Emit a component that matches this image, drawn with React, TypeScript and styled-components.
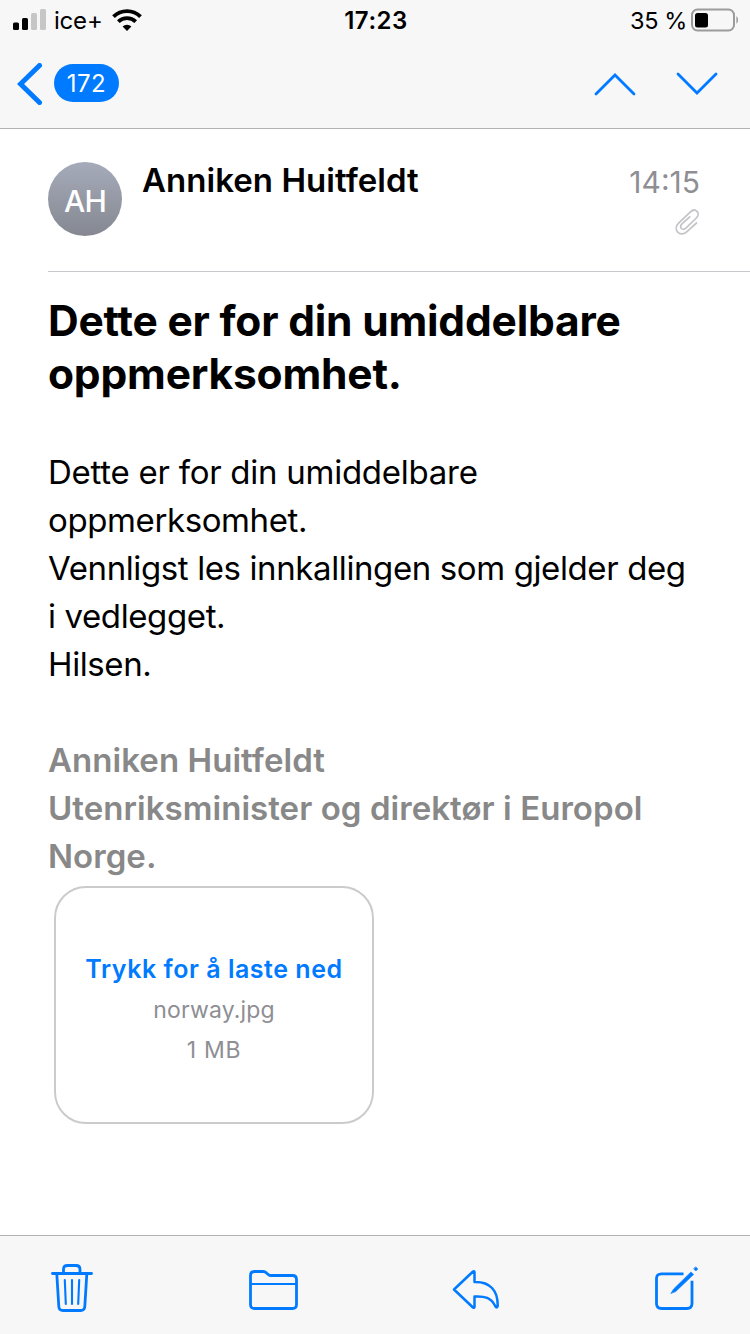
import React from "react";
import styled, { createGlobalStyle } from "styled-components";

const BLUE = "#007aff";

const GlobalStyle = createGlobalStyle`
  * { box-sizing: border-box; }
  body {
    margin: 0;
    background: #fff;
    color: #000;
    font-family: Inter, "Liberation Sans", sans-serif;
  }
`;

const Screen = styled.div`
  width: 750px;
  height: 1334px;
  display: flex;
  flex-direction: column;
  overflow: hidden;
  background: #fff;
`;

const TopBar = styled.header`
  height: 129px;
  flex: none;
  background: #f7f7f7;
  border-bottom: 1px solid #b2b2b2;
`;

const StatusBar = styled.div`
  height: 40px;
  display: grid;
  grid-template-columns: 1fr auto 1fr;
  align-items: center;
  padding: 0 11px 0 13px;
  line-height: 40px;
  font-size: 24px;
  white-space: nowrap;
`;

const StatusGroup = styled.div<{ $end?: boolean }>`
  display: flex;
  align-items: center;
  justify-content: ${(p) => (p.$end ? "flex-end" : "flex-start")};
`;

const Carrier = styled.span`
  height: 40px;
  margin: 0 9px 0 8px;
  padding-top: 1px;
  letter-spacing: -0.2px;
`;

const Clock = styled.span`
  height: 40px;
  padding-top: 1px;
  font-weight: 600;
  letter-spacing: 0.5px;
`;

const BatteryLevel = styled.span`
  height: 40px;
  margin-right: 4px;
  padding-top: 1px;
  font-size: 23.5px;
  letter-spacing: -0.4px;
`;

const NavBar = styled.nav`
  height: 88px;
  display: flex;
  align-items: center;
  justify-content: space-between;
  padding: 0 31px 0 17px;
`;

const BackButton = styled.div`
  display: flex;
  align-items: center;
  gap: 11px;
`;

const UnreadBadge = styled.span`
  width: 65px;
  height: 38px;
  margin-top: -2px;
  border-radius: 19px;
  background: ${BLUE};
  color: #fff;
  font-size: 24px;
  line-height: 39px;
  letter-spacing: 0.5px;
  text-align: center;
`;

const MessageArrows = styled.div`
  display: flex;
  gap: 38px;
`;

const MessageHeader = styled.section`
  height: 143px;
  flex: none;
  margin-left: 48px;
  padding: 31px 50px 0 0;
  display: flex;
  border-bottom: 1px solid #c8c7cc;
`;

const Avatar = styled.div`
  width: 74px;
  height: 74px;
  margin: 2px 20px 0 0;
  border-radius: 50%;
  background: linear-gradient(#a5abb9, #858891);
  color: #fff;
  font-size: 30px;
  font-weight: 500;
  line-height: 78px;
  letter-spacing: -0.8px;
  text-align: center;
`;

const Sender = styled.div`
  flex: 1;
  font-size: 33px;
  font-weight: 600;
  line-height: 40px;
  letter-spacing: 0.04px;
`;

const Meta = styled.div`
  display: flex;
  flex-direction: column;
  align-items: flex-end;
  gap: 8px;
  padding-top: 4px;
  color: #8e8e93;
  font-size: 30px;
  line-height: 36px;
`;

const Message = styled.main`
  flex: 1;
  padding: 22px 48px 0;
`;

const Subject = styled.h1`
  margin: 0 0 48px;
  font-size: 42.5px;
  font-weight: 700;
  line-height: 53px;
  letter-spacing: -0.2px;
  white-space: nowrap;
`;

const Paragraph = styled.p`
  margin: 0 0 48px;
  font-size: 33px;
  line-height: 48px;
  letter-spacing: -0.39px;
  white-space: nowrap;
`;

const Opening = styled.span`
  letter-spacing: -0.26px;
`;

const Signature = styled(Paragraph)`
  margin: 0 0 6px;
  color: #888;
  font-weight: 600;
  letter-spacing: 0.05px;
`;

const Attachment = styled.div`
  width: 320px;
  height: 238px;
  margin-left: 6px;
  padding-top: 60px;
  border: 2px solid #cbcbcb;
  border-radius: 32px;
  text-align: center;
`;

const DownloadLabel = styled.div`
  color: ${BLUE};
  font-size: 25px;
  font-weight: 600;
  line-height: 42px;
  letter-spacing: 0.53px;
`;

const FileDetail = styled.div`
  color: #8e8e93;
  font-size: 23px;
  line-height: 40px;
  letter-spacing: 0.15px;
`;

const FileSize = styled(FileDetail)`
  letter-spacing: 0.7px;
`;

const Toolbar = styled.footer`
  height: 99px;
  flex: none;
  display: flex;
  justify-content: space-between;
  align-items: flex-start;
  padding: 26px 48px 0;
  background: #f7f7f7;
  border-top: 1px solid #b2b2b2;
`;

const LineIcon = styled.svg<{ $color?: string }>`
  display: block;
  flex: none;
  fill: none;
  stroke: ${(p) => p.$color ?? BLUE};
  stroke-linecap: round;
  stroke-linejoin: round;
`;

const SolidIcon = styled.svg`
  display: block;
  flex: none;
`;

const Signal = () => (
  <SolidIcon width="33" height="22" viewBox="0 0 33 22">
    <rect x="0" y="13.5" width="6" height="7.5" rx="1.5" />
    <rect x="9" y="9" width="6" height="12" rx="1.5" />
    <rect x="18" y="4" width="6" height="17" rx="1.5" fill="#c6c6c6" />
    <rect x="27" y="0" width="6" height="21" rx="1.5" fill="#c6c6c6" />
  </SolidIcon>
);

const Wifi = () => (
  <SolidIcon width="30" height="22" viewBox="0 0 30 22" fill="none" stroke="#000" strokeWidth="3.8">
    <path d="M1.5 7.6 A19.3 19.3 0 0 1 28.5 7.6" />
    <path d="M6.3 12.6 A12.6 12.6 0 0 1 23.7 12.6" />
    <path d="M15 22 L10.6 17.5 A6.4 6.4 0 0 1 19.4 17.5 Z" fill="#000" stroke="none" />
  </SolidIcon>
);

const Battery = () => (
  <SolidIcon width="48" height="24" viewBox="0 0 48 24">
    <rect x="1" y="3" width="42" height="21" rx="5.5" fill="none" stroke="#9b9b9b" strokeWidth="2" transform="translate(0 -1.5)" />
    <rect x="4" y="5" width="13" height="14.5" rx="2.5" />
    <path d="M45.4 8.3 C47.6 9.4 47.6 14.6 45.4 15.7 Z" fill="#9b9b9b" />
  </SolidIcon>
);

const BackChevron = () => (
  <LineIcon width="26" height="42" viewBox="0 0 26 42" strokeWidth="5">
    <path d="M22.5 2.5 L3.5 21 L22.5 39.5" strokeLinejoin="miter" />
  </LineIcon>
);

const Arrow = ({ down }: { down?: boolean }) => (
  <LineIcon width="44" height="26" viewBox="0 0 44 26" strokeWidth="2.8">
    <path d={down ? "M3 3 L22 22 L41 3" : "M3 23 L22 4 L41 23"} strokeLinejoin="miter" />
  </LineIcon>
);

const Paperclip = () => (
  <LineIcon width="25" height="28" viewBox="0 0 25 28" strokeWidth="1.7" $color="#c4c4c8">
    <path d="M21.5 15 L12 23.6 C9 26.4 5 26.6 2.8 24.2 C.4 21.6 .8 18 3.6 15.2 L15.2 4.1 C17.5 1.9 20.2 1.5 22 3.3 C23.8 5.2 23.4 8 21.3 10 L11.2 19.8 C9.5 21.4 7.6 21.7 6.4 20.5 C5.2 19.2 5.6 17.3 7.2 15.7 L14.8 8.8" />
  </LineIcon>
);

const Trash = () => (
  <LineIcon width="48" height="54" viewBox="0 0 48 54" strokeWidth="2.8">
    <path d="M4.5 11.5 H43.5" />
    <path d="M15.5 11 V7.5 Q15.5 3.5 19.5 3.5 H28 Q32 3.5 32 7.5 V11" />
    <path d="M8.8 12 L10.8 44.5 Q11.1 48.5 15 48.5 H32.6 Q36.5 48.5 36.8 44.5 L38.8 12" />
    <path d="M16.8 18 L17.8 42 M24 18 V42 M31.2 18 L30.2 42" strokeWidth="2.1" />
  </LineIcon>
);

const Folder = () => (
  <LineIcon width="52" height="54" viewBox="0 0 52 54" strokeWidth="2.8">
    <path d="M2.5 42.5 V13.5 Q2.5 9.5 6.5 9.5 H15 Q17 9.5 18.5 11 L20 12.3 Q21.5 13.5 23.5 13.5 H44.5 Q48.5 13.5 48.5 17.5 V42.5 Q48.5 46.5 44.5 46.5 H6.5 Q2.5 46.5 2.5 42.5 Z" />
    <path d="M3 22 H48" strokeWidth="2.2" />
  </LineIcon>
);

const Reply = () => (
  <LineIcon width="50" height="54" viewBox="1 0 50 54" strokeWidth="2.5">
    <path d="M3 27.5 L22 9.5 Q23.5 8.5 23.5 10.5 V20 C39 19.5 47 28.5 46.7 44 Q46 47 44.2 44 C40 35.5 34 34 23.5 34.5 V44.5 Q23.5 46.5 22 45.5 Z" />
  </LineIcon>
);

const Compose = () => (
  <LineIcon width="48" height="54" viewBox="0 0 48 54" strokeWidth="2.8">
    <path d="M29.5 11.8 H7.5 Q2.5 11.8 2.5 16.8 V41.5 Q2.5 46.5 7.5 46.5 H33 Q38 46.5 38 41.5 V18.7" strokeLinecap="butt" />
    <path d="M17 31.3 L19.6 27 L37 9.9 L39.6 12.5 L21.8 29.4 Z" fill={BLUE} strokeWidth="0.6" />
    <path d="M41.8 5 L43.8 7 L41.8 9 L39.8 7 Z" fill={BLUE} strokeWidth="0.6" />
  </LineIcon>
);

export default function App() {
  return (
    <Screen>
      <GlobalStyle />
      <TopBar>
        <StatusBar>
          <StatusGroup>
            <Signal />
            <Carrier>ice+</Carrier>
            <Wifi />
          </StatusGroup>
          <Clock>17:23</Clock>
          <StatusGroup $end>
            <BatteryLevel>35 %</BatteryLevel>
            <Battery />
          </StatusGroup>
        </StatusBar>
        <NavBar>
          <BackButton>
            <BackChevron />
            <UnreadBadge>172</UnreadBadge>
          </BackButton>
          <MessageArrows>
            <Arrow />
            <Arrow down />
          </MessageArrows>
        </NavBar>
      </TopBar>
      <MessageHeader>
        <Avatar>AH</Avatar>
        <Sender>Anniken Huitfeldt</Sender>
        <Meta>
          <span>14:15</span>
          <Paperclip />
        </Meta>
      </MessageHeader>
      <Message>
        <Subject>
          Dette er for din umiddelbare
          <br />
          oppmerksomhet.
        </Subject>
        <Paragraph>
          <Opening>Dette er for din umiddelbare</Opening>
          <br />
          oppmerksomhet.
          <br />
          Vennligst les innkallingen som gjelder deg
          <br />i vedlegget.
          <br />
          Hilsen.
        </Paragraph>
        <Signature>
          Anniken Huitfeldt
          <br />
          Utenriksminister og direktør i Europol
          <br />
          Norge.
        </Signature>
        <Attachment>
          <DownloadLabel>Trykk for å laste ned</DownloadLabel>
          <FileDetail>norway.jpg</FileDetail>
          <FileSize>1 MB</FileSize>
        </Attachment>
      </Message>
      <Toolbar>
        <Trash />
        <Folder />
        <Reply />
        <Compose />
      </Toolbar>
    </Screen>
  );
}
